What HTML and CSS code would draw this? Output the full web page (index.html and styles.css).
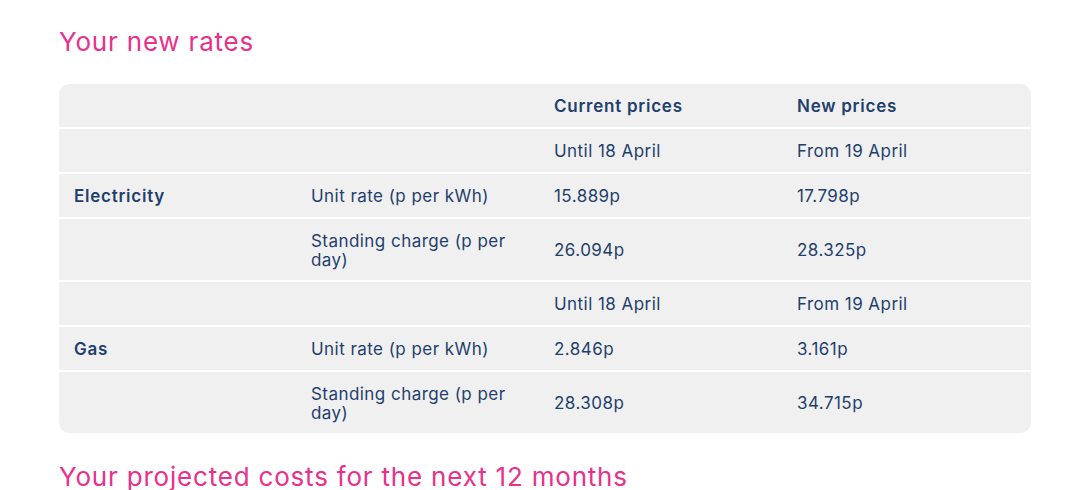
FILE: index.html
```html
<!DOCTYPE html>
<html lang="en">
<head>
<meta charset="utf-8">
<title>Your new rates</title>
<link rel="stylesheet" href="styles.css">
</head>
<body>
<main class="page">
  <h2 class="section-title">Your new rates</h2>
  <div class="rates">
    <div class="row">
      <div class="cell"></div>
      <div class="cell"></div>
      <div class="cell strong">Current prices</div>
      <div class="cell strong">New prices</div>
    </div>
    <div class="row">
      <div class="cell"></div>
      <div class="cell"></div>
      <div class="cell">Until 18 April</div>
      <div class="cell">From 19 April</div>
    </div>
    <div class="row">
      <div class="cell strong">Electricity</div>
      <div class="cell">Unit rate (p per kWh)</div>
      <div class="cell">15.889p</div>
      <div class="cell">17.798p</div>
    </div>
    <div class="row">
      <div class="cell"></div>
      <div class="cell">Standing charge (p per day)</div>
      <div class="cell">26.094p</div>
      <div class="cell">28.325p</div>
    </div>
    <div class="row">
      <div class="cell"></div>
      <div class="cell"></div>
      <div class="cell">Until 18 April</div>
      <div class="cell">From 19 April</div>
    </div>
    <div class="row">
      <div class="cell strong">Gas</div>
      <div class="cell">Unit rate (p per kWh)</div>
      <div class="cell">2.846p</div>
      <div class="cell">3.161p</div>
    </div>
    <div class="row">
      <div class="cell"></div>
      <div class="cell">Standing charge (p per day)</div>
      <div class="cell">28.308p</div>
      <div class="cell">34.715p</div>
    </div>
  </div>
  <h2 class="section-title next">Your projected costs for the next 12 months</h2>
</main>
</body>
</html>
```
FILE: styles.css
```css
* { box-sizing: border-box; }
html, body { margin: 0; padding: 0; background: #ffffff; }
body {
  font-family: Inter, "Open Sans", sans-serif;
  color: #1f3f6d;
}
.page {
  padding: 26px 36px 0 59px;
}
.section-title {
  margin: 0;
  font-weight: 400;
  font-size: 26px;
  line-height: 32px;
  letter-spacing: 0.8px;
  color: #e8318c;
}
.rates {
  margin-top: 26px;
  background: #f0f0f0;
  border-radius: 10px;
  overflow: hidden;
}
.row {
  display: grid;
  grid-template-columns: 237px 243px 243px 1fr;
  border-top: 2px solid #ffffff;
}
.row:first-child { border-top: 0; }
.cell {
  padding: 13px 15px 11px;
  font-size: 17px;
  line-height: 18.5px;
  letter-spacing: 0.45px;
  min-height: 43px;
  display: flex;
  align-items: center;
}
.strong { font-weight: 600; letter-spacing: 0.75px; }
.next {
  margin-top: 28px;
}
```
